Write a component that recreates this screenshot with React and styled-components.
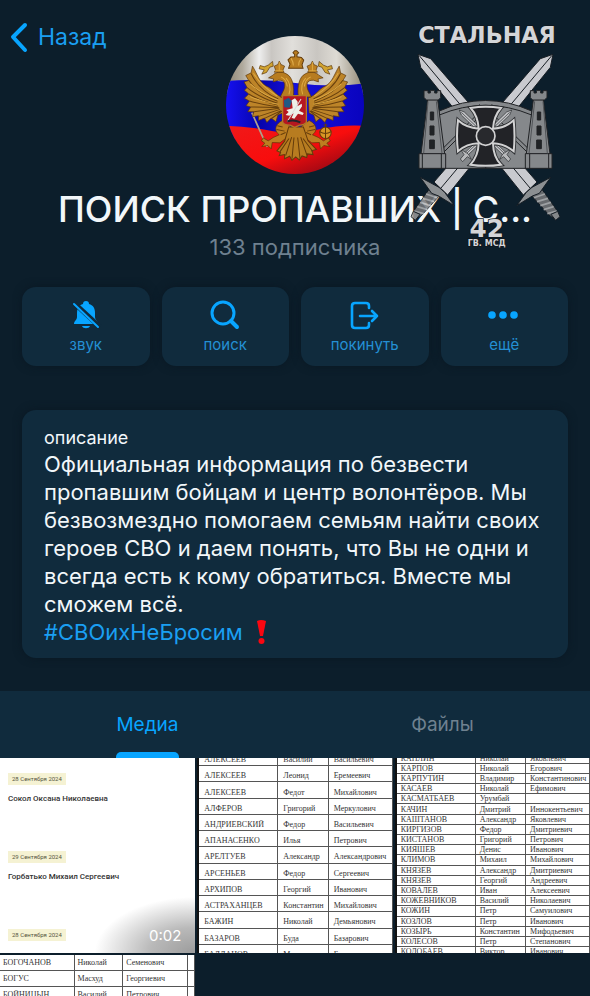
import React from "react";
import styled, { createGlobalStyle, css } from "styled-components";

const color = {
  page: "#0c1e2b",
  panel: "#102b3d",
  accent: "#1a9ff2",
  bright: "#08a5ff",
  muted: "#6f8190",
  text: "#f2f7fa",
};

const GlobalStyle = createGlobalStyle`
  *, *::before, *::after { box-sizing: border-box; }
  body { margin: 0; background: ${color.page}; }
  button { font: inherit; color: inherit; background: none; border: 0; padding: 0; cursor: pointer; }
  h1, h2, p { margin: 0; font-weight: 400; }
`;

const Page = styled.main`
  position: relative;
  display: flex;
  flex-direction: column;
  height: 100vh;
  overflow: hidden;
  background: ${color.page};
  color: ${color.text};
  font-family: Inter, "Liberation Sans", sans-serif;
`;

const Header = styled.header`
  display: grid;
  grid-template-columns: 1fr auto 1fr;
  align-items: start;
  padding: 20px 10px 0;
`;

const BackButton = styled.button`
  display: flex;
  align-items: center;
  gap: 10px;
  justify-self: start;
  color: ${color.accent};
  font-size: 23px;
  line-height: 34px;
`;

const AvatarFrame = styled.div`
  width: 138px;
  height: 138px;
  margin-top: 16px;
  border-radius: 50%;
  overflow: hidden;
  svg { display: block; width: 100%; height: 100%; }
`;

const Heading = styled.div`
  display: flex;
  flex-direction: column;
  align-items: center;
  padding: 12px 56px 0;
  text-align: center;
  white-space: nowrap;
`;

const Title = styled.h1`
  font-size: 36px;
  font-weight: 500;
  line-height: 46px;
`;

const Subscribers = styled.p`
  color: ${color.muted};
  font-size: 22px;
  line-height: 30px;
`;

const EmblemOverlay = styled.div`
  position: absolute;
  top: 10px;
  right: 0;
  pointer-events: none;
  svg { display: block; }
`;

const Actions = styled.nav`
  display: grid;
  grid-template-columns: repeat(4, 1fr);
  gap: 12px;
  padding: 25px 22px 0;
`;

const panel = css`
  background: ${color.panel};
  border-radius: 14px;
  box-shadow: 0 0 8px #0a1823;
`;

const ActionButton = styled.button`
  ${panel}
  display: flex;
  flex-direction: column;
  align-items: center;
  height: 79px;
  padding-top: 12px;
  gap: 4px;
  color: ${color.bright};
  svg { display: block; flex: none; }
`;

const ActionLabel = styled.span`
  color: #2490d4;
  font-size: 15px;
  line-height: 20px;
`;

const Card = styled.section`
  ${panel}
  margin: 44px 22px 0;
  padding: 15px 20px 12px 22px;
`;

const CardLabel = styled.h2`
  font-size: 18px;
  line-height: 25px;
`;

const Description = styled.p`
  font-size: 22px;
  line-height: 28px;
`;

const Hashtag = styled.a`
  color: ${color.accent};
  text-decoration: none;
`;

const Exclamation = styled.svg`
  margin-left: 14px;
  vertical-align: -4px;
`;

const Tabs = styled.div`
  display: grid;
  grid-template-columns: 1fr 1fr;
  flex: none;
  margin-top: 33px;
  background: ${color.panel};
`;

const Tab = styled.button`
  display: flex;
  justify-content: center;
  height: 67px;
  color: ${(p) => (p.$active ? color.bright : color.muted)};
  font-size: 19px;
  line-height: 67px;
`;

const TabText = styled.span`
  position: relative;
  ${(p) =>
    p.$active &&
    css`
      &::after {
        content: "";
        position: absolute;
        left: 0;
        right: 0;
        bottom: 0;
        height: 6px;
        border-radius: 5px 5px 0 0;
        background: ${color.bright};
      }
    `}
`;

const Gallery = styled.div`
  display: grid;
  grid-template-columns: repeat(3, 1fr);
  grid-auto-rows: 195px;
  gap: 2px;
  flex: 1;
  min-height: 0;
  overflow: hidden;
`;

const Sheet = styled.div`
  display: flex;
  align-items: ${(p) => p.$align || "center"};
  min-width: 0;
  overflow: hidden;
  background: #fff;
`;

const NameTable = styled.table`
  width: 100%;
  flex: none;
  height: ${(p) => p.$height}px;
  table-layout: fixed;
  border-collapse: collapse;
  border-left: ${(p) => (p.$edge ? 2 : 0)}px solid #111;
  border-right: ${(p) => (p.$edge ? 1 : 0)}px solid #333;
  color: #333;
  font-family: "Liberation Serif", serif;
  font-size: 8px;
  line-height: 9px;
  td {
    padding: ${(p) => p.$pad};
    border-bottom: 1px solid #555;
    border-right: 1px solid #555;
    white-space: nowrap;
    vertical-align: middle;
  }
`;

const Video = styled.div`
  position: relative;
  display: flex;
  flex-direction: column;
  overflow: hidden;
  padding: 15px 8px 0;
  background: radial-gradient(ellipse 100px 56px at 100% 100%, #9c9c9c, #b9b9b9 45%, #fff);
  font-family: Roboto, sans-serif;
`;

const VideoEntry = styled.div`
  display: flex;
  flex-direction: column;
  align-items: flex-start;
  flex: none;
  height: 78px;
  gap: 7px;
`;

const DateBadge = styled.span`
  padding: 0 4px;
  background: #f5f2d3;
  color: #55553f;
  font-size: 6px;
  line-height: 12px;
`;

const Person = styled.span`
  color: #333;
  font-size: 8px;
  font-weight: 500;
  line-height: 14px;
  white-space: nowrap;
`;

const Duration = styled.span`
  position: absolute;
  right: 14px;
  bottom: 8px;
  color: #fff;
  font-family: Inter, sans-serif;
  font-size: 15px;
  line-height: 18px;
`;

function EagleHalf() {
  return (
    <g stroke="#5a3508" strokeWidth="2" strokeLinejoin="round">
      <path fill="#bd8428" d="M128 124 L124 144 L108 152 L117 167 L103 171 L112 188 L104 196 L117 207 L104 220 L119 228 L109 242 L123 246 L114 260 L132 260 L128 275 L146 272 L146 286 L164 279 L171 292 L184 279 L198 290 L204 270 L218 264 L220 218 C198 213 190 192 169 183 C148 172 143 148 128 124Z" />
      <g fill="none" stroke="#68400d" strokeWidth="3">
        <path d="M124 146 Q147 196 205 222 M117 166 Q141 204 203 229 M112 188 Q145 216 203 235 M117 207 Q155 230 204 240 M119 228 Q158 240 205 246 M123 246 Q164 246 208 248 M132 260 L208 250 M147 274 L210 253 M164 280 L213 257 M184 281 L216 258" />
      </g>
      <path fill="none" stroke="#dda944" strokeWidth="3" d="M131 145 Q153 184 202 213 M122 177 Q158 210 205 225 M121 215 Q160 232 205 238" />
      <path fill="#b77c20" d="M250 216 C254 184 247 155 229 147 C213 137 195 143 189 151 L176 159 L191 162 L190 171 L205 166 C227 165 226 181 222 194 L211 216Z" />
      <path fill="none" stroke="#e0ac42" strokeWidth="3" d="M228 160 Q246 179 237 208 M213 156 Q230 163 232 185" />
      <path fill="#bd8023" d="M193 142 L197 136 L193 124 L204 119 L208 109 L213 119 L224 124 L219 136 L222 142Z" />
      <path d="M195 138H220 M208 111V137" stroke="#f0be4c" />
      <path fill="#d1a432" d="M188 110 L175 121 L163 126 L151 122 L148 132 L163 135 L156 148 L170 143 L180 127 L190 124Z" />
      <path fill="#bd7e21" d="M218 286 C190 300 195 320 208 329 L190 337 L175 347 L160 338 L155 347 L165 354 L156 364 L174 361 L184 371 L187 352 L210 353 L235 334 L241 304Z" />
      <path d="M202 302 L218 306 M200 313 L224 318 M212 329 L227 322" fill="none" stroke="#69400b" strokeWidth="3" />
    </g>
  );
}

function Avatar() {
  return (
    <AvatarFrame>
      <svg viewBox="49 34 412 412" role="img" aria-label="Герб на фоне флага">
        <defs>
          <linearGradient id="silk" x1="0" x2="1">
            <stop offset="0" stopColor="#8c8371" />
            <stop offset=".12" stopColor="#b0aa9d" />
            <stop offset=".24" stopColor="#eee" />
            <stop offset=".33" stopColor="#c9c6c2" />
            <stop offset=".48" stopColor="#e1dfdb" />
            <stop offset=".66" stopColor="#c9c6c1" />
            <stop offset=".8" stopColor="#dedbd4" />
            <stop offset="1" stopColor="#8f8673" />
          </linearGradient>
          <linearGradient id="blue">
            <stop stopColor="#1510f0" />
            <stop offset=".25" stopColor="#0604ac" />
            <stop offset=".5" stopColor="#1710db" />
            <stop offset="1" stopColor="#0903be" />
          </linearGradient>
          <linearGradient id="red" x2="1" y2="1">
            <stop stopColor="#f01919" />
            <stop offset=".5" stopColor="#f80d0d" />
            <stop offset=".8" stopColor="#a80913" />
            <stop offset="1" stopColor="#ed1712" />
          </linearGradient>
        </defs>
        <path fill="url(#silk)" d="M49 34H461V210H49Z" />
        <path fill="url(#blue)" d="M49 168 Q150 160 257 174 T461 176 V340H49Z" />
        <path fill="url(#red)" d="M49 302 Q130 306 190 318 T320 314 T461 302 V446H49Z" />
        <path d="M126 263L172 365" stroke="#b0a08a" strokeWidth="5" />
        <EagleHalf />
        <g transform="translate(515 0) scale(-1 1)"><EagleHalf /></g>
        <g fill="#b77c20" stroke="#633b0b" strokeWidth="3">
          <path d="M236 130 L240 118 L234 105 L243 97 L254 96 L254 89 L249 84 L254 78 L260 78 L266 84 L261 89 L261 96 L274 98 L281 106 L276 120 L279 130Z" />
          <path d="M236 306 L224 348 L201 377 L212 382 L208 391 L224 388 L224 400 L239 393 L246 405 L257 395 L268 404 L276 392 L290 397 L292 386 L309 388 L305 376 L319 373 L294 347 L280 306Z" />
          <path fill="none" d="M237 340L210 380 M245 336L227 391 M252 337L246 400 M263 337L270 400 M272 336L291 391 M279 340L308 379" />
          <circle cx="346" cy="323" r="17" fill="#d89624" />
          <path fill="none" d="M329 320Q346 330 362 320 M346 306V340 M346 295V306 M340 300H352" />
        </g>
        <path fill="none" stroke="#e0ad4b" strokeWidth="3" d="M243 100Q250 111 250 122 M273 101Q265 111 266 122" />
        <path fill="#b61720" stroke="#b17a28" strokeWidth="4" d="M218 212H289V292Q282 301 268 300L254 307L241 300Q222 301 218 291Z" />
        <path fill="#205a84" d="M222 226L236 218L246 228L239 248L223 247Z" />
        <path fill="#edf0e8" d="M245 226L255 220L263 230L262 244L275 236L276 244L267 257L281 264L278 270L264 266L253 281L245 278L251 265L238 272L227 270L236 261L229 255L248 250Z" />
        <path fill="none" stroke="#ddd" strokeWidth="3" d="M273 222L232 289" />
        <path fill="none" stroke="#25232b" strokeWidth="6" d="M232 289Q251 282 271 292" />
      </svg>
    </AvatarFrame>
  );
}

function Sword() {
  return (
    <g stroke="#171d23" strokeWidth="3" strokeLinejoin="round">
      <path fill="#c9cacf" d="M54 133L92 146L411 516L370 555L62 172Z" />
      <path fill="none" d="M57 136L390 534" />
      <g opacity=".85">
        <path fill="#77787a" d="M392 554L423 534L468 597L478 621L466 629L447 615Z" />
        <path stroke="#b7b7b8" strokeWidth="5" d="M402 563L435 552 M411 575L444 565 M421 587L453 577 M431 599L461 590 M442 611L471 603" />
        <path fill="#a2a3a5" d="M452 502L418 550L397 558L350 587L379 547L396 532Z" />
        <path fill="#9a9a9a" d="M453 613L473 604L480 620L467 631Z" />
      </g>
    </g>
  );
}

function Tower() {
  return (
    <g fill="#85888b" stroke="#202225" strokeWidth="3" strokeLinejoin="round">
      <path d="M83 269H113L134 432H63Z" />
      <path d="M72 242H84V249H91V241H104V249H111V242H122V263L115 270H80L72 263Z" />
      <path d="M57 431H137V475H57Z M67 431V475 M124 431V475" />
      <path fill="#202326" d="M91 306H101V330H91Z M90 348H102V375H90Z M89 390H103V416H89Z" />
      <path fill="none" stroke="#515458" d="M84 274L71 430 M109 274L126 430" />
    </g>
  );
}

function SmallSword() {
  return (
    <g stroke="#24272a" strokeWidth="2">
      <path fill="#c3c4c7" d="M178 300L193 306L320 430L312 438L184 315Z" />
      <path fill="none" d="M184 307L315 432" />
      <path fill="#b8b9bb" d="M332 417L321 434L332 447L325 455L311 440L299 448L308 432Z" />
    </g>
  );
}

const crossPath =
  "M212 294Q257 286 303 294Q281 319 279 356Q316 354 341 331Q346 378 341 424Q314 401 279 400Q280 442 303 464Q257 471 211 464Q235 439 236 400Q200 401 174 424Q168 378 174 331Q199 354 236 356Q234 318 212 294Z";

function Emblem() {
  const flip = "translate(513 0) scale(-1 1)";
  return (
    <EmblemOverlay>
      <svg width="190" height="250" viewBox="0 0 570 750" role="img" aria-label="Стальная, 42 гв. мсд">
        <g transform={flip}><Sword /></g>
        <Sword />
        <path fill="#85888b" stroke="#202225" strokeWidth="3" d="M118 303Q256 240 395 303V475H118Z" />
        <path fill="none" stroke="#202225" strokeWidth="3" d="M118 315Q256 257 395 315 M130 414L245 300 M132 426L249 309 M383 414L265 300 M381 426L261 309 M257 455V475 M238 283L257 310L276 283" />
        <Tower />
        <g transform={flip}><Tower /></g>
        <SmallSword />
        <g transform={flip}><SmallSword /></g>
        <path fill="#24262a" stroke="#292b2e" strokeWidth="11" d={crossPath} />
        <path fill="#222327" stroke="#d1d1d2" strokeWidth="6" d={crossPath} />
        <circle cx="257" cy="378" r="28" fill="#28292d" stroke="#d1d1d2" strokeWidth="5" />
        <g fill="#d4d5d8" stroke="#11171c" strokeWidth="5" paintOrder="stroke" fontFamily="DejaVu Sans, sans-serif" fontWeight="700" textAnchor="middle">
          <text x="261" y="98" fontSize="67">СТАЛЬНАЯ</text>
          <text x="260" y="680" fontSize="74">42</text>
          <text x="260" y="709" fontSize="24">ГВ. МСД</text>
        </g>
      </svg>
    </EmblemOverlay>
  );
}

function MutedBellIcon() {
  return (
    <svg width="32" height="32" viewBox="0 0 32 32" aria-hidden="true">
      <path fill="currentColor" d="M16 2c2 0 3 1 3 3 4 1 6 4 6 9v4c0 3 3 4 3 7H4c0-3 3-4 3-7v-4c0-5 2-8 6-9 0-2 1-3 3-3Zm-4 25h8c-1 3-7 3-8 0Z" />
      <path stroke={color.panel} strokeWidth="5" d="M3 3L30 28" />
      <path stroke="currentColor" strokeWidth="2" strokeLinecap="round" d="M4 5L28 28" />
    </svg>
  );
}

function SearchIcon() {
  return (
    <svg width="32" height="32" viewBox="0 0 32 32" fill="none" stroke="currentColor" strokeLinecap="round" aria-hidden="true">
      <circle cx="14" cy="14" r="11" strokeWidth="3" />
      <path d="M22 22L28 28" strokeWidth="4" />
    </svg>
  );
}

function LeaveIcon() {
  return (
    <svg width="32" height="32" viewBox="0 0 32 32" fill="none" stroke="currentColor" strokeWidth="2.6" strokeLinecap="round" strokeLinejoin="round" aria-hidden="true">
      <path d="M20 9V7Q20 4 17 4H6Q3 4 3 7V26Q3 29 6 29H17Q20 29 20 26V24" />
      <path d="M11 17H28M23 12L28 17L23 22" />
    </svg>
  );
}

function MoreIcon() {
  return (
    <svg width="32" height="32" viewBox="0 0 32 32" fill="currentColor" aria-hidden="true">
      <circle cx="4" cy="16" r="3.8" /><circle cx="15" cy="16" r="3.8" /><circle cx="26" cy="16" r="3.8" />
    </svg>
  );
}

const actions = [
  ["звук", MutedBellIcon],
  ["поиск", SearchIcon],
  ["покинуть", LeaveIcon],
  ["ещё", MoreIcon],
];

const listA = `АЛЕКСЕЕВ|Василий|Васильевич
АЛЕКСЕЕВ|Леонид|Еремеевич
АЛЕКСЕЕВ|Федот|Михайлович
АЛФЕРОВ|Григорий|Меркулович
АНДРИЕВСКИЙ|Федор|Васильевич
АПАНАСЕНКО|Илья|Петрович
АРЕЛТУЕВ|Александр|Александрович
АРСЕНЬЕВ|Федор|Сергеевич
АРХИПОВ|Георгий|Иванович
АСТРАХАНЦЕВ|Константин|Михайлович
БАЖИН|Николай|Демьянович
БАЗАРОВ|Буда|Базарович
БАЛДАНОВ|Мэргэн|Баирович`;

const listB = `КАПЛИН|Николай|Яковлевич
КАРПОВ|Николай|Егорович
КАРПУТИН|Владимир|Константинович
КАСАЕВ|Николай|Ефимович
КАСМАТБАЕВ|Урумбай|
КАЧИН|Дмитрий|Иннокентьевич
КАШТАНОВ|Александр|Яковлевич
КИРГИЗОВ|Федор|Дмитриевич
КИСТАНОВ|Григорий|Петрович
КИЯШЕВ|Денис|Иванович
КЛИМОВ|Михаил|Михайлович
КНЯЗЕВ|Александр|Дмитриевич
КНЯЗЕВ|Георгий|Андреевич
КОВАЛЕВ|Иван|Алексеевич
КОЖЕВНИКОВ|Василий|Николаевич
КОЖИН|Петр|Самуилович
КОЗЛОВ|Петр|Иванович
КОЗЫРЬ|Константин|Мифодьевич
КОЛЕСОВ|Петр|Степанович
КОЛОБАЕВ|Виктор|Иванович`;

const listC = `БОГОЧАНОВ|Николай|Семенович|
БОГУС|Масхуд|Георгиевич|
БОЙНИЦЫН|Василий|Петрович|`;

function Names({ list, widths, ...style }) {
  return (
    <NameTable {...style}>
      <colgroup>{widths.map((w, i) => <col key={i} style={{ width: w }} />)}</colgroup>
      <tbody>
        {list.split("\n").map((row, i) => (
          <tr key={i}>{row.split("|").map((cell, j) => <td key={j}>{cell}</td>)}</tr>
        ))}
      </tbody>
    </NameTable>
  );
}

export default function App() {
  return (
    <Page>
      <GlobalStyle />
      <Header>
        <BackButton>
          <svg width="18" height="32" viewBox="0 0 18 32" fill="none" stroke={color.bright} strokeWidth="4" strokeLinecap="round" strokeLinejoin="round" aria-hidden="true">
            <path d="M15 4L3 16L15 29" />
          </svg>
          Назад
        </BackButton>
        <Avatar />
      </Header>
      <Heading>
        <Title>ПОИСК ПРОПАВШИХ | С...</Title>
        <Subscribers>133 подписчика</Subscribers>
      </Heading>
      <Emblem />
      <Actions>
        {actions.map(([label, Icon]) => (
          <ActionButton key={label}>
            <Icon />
            <ActionLabel>{label}</ActionLabel>
          </ActionButton>
        ))}
      </Actions>
      <Card>
        <CardLabel>описание</CardLabel>
        <Description>
          Официальная информация по безвести пропавшим бойцам и центр волонтёров. Мы безвозмездно
          помогаем семьям найти своих героев СВО и даем понять, что Вы не одни и всегда есть к кому
          обратиться. Вместе мы сможем всё.
          <br />
          <Hashtag href="#media">#СВОихНеБросим</Hashtag>
          <Exclamation width="9" height="24" viewBox="0 0 9 24" fill="#fa0711" role="img" aria-label="!">
            <path d="M0 1Q4 -1 9 1L6 16H3Z" />
            <circle cx="4.5" cy="21" r="3" />
          </Exclamation>
        </Description>
      </Card>
      <Tabs role="tablist">
        <Tab role="tab" aria-selected="true" $active><TabText $active>Медиа</TabText></Tab>
        <Tab role="tab" aria-selected="false"><TabText>Файлы</TabText></Tab>
      </Tabs>
      <Gallery id="media">
        <Video>
          <VideoEntry><DateBadge>28 Сентября 2024</DateBadge><Person>Сокол Оксана Николаевна</Person></VideoEntry>
          <VideoEntry><DateBadge>29 Сентября 2024</DateBadge><Person>Горбатько Михаил Сергеевич</Person></VideoEntry>
          <VideoEntry><DateBadge>28 Сентября 2024</DateBadge></VideoEntry>
          <Duration>0:02</Duration>
        </Video>
        <Sheet>
          <Names list={listA} widths={["41%", "26%", "33%"]} $height={211} $pad="4px 0 0 5px" $edge />
        </Sheet>
        <Sheet>
          <Names list={listB} widths={["41%", "26%", "33%"]} $height={204} $pad="0 0 0 4px" $edge />
        </Sheet>
        <Sheet $align="flex-start">
          <Names list={listC} widths={["38%", "25%", "33%", "4%"]} $height={48} $pad="1px 0 0 3px" />
        </Sheet>
      </Gallery>
    </Page>
  );
}
